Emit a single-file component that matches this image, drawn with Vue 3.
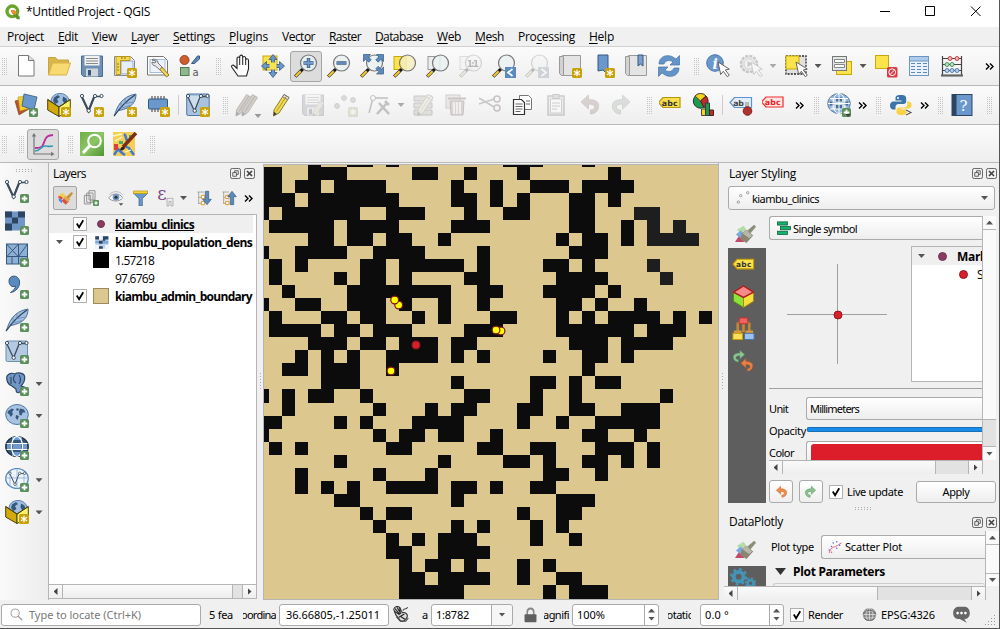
<script setup>
const vFit = {
  mounted(el, binding) {
    const n = el.textContent.length
    const natural = el.getBoundingClientRect().width
    if (n > 0 && binding.value) el.style.letterSpacing = (binding.value - natural) / n + 'px'
  },
}

const plus = '<rect x="15" y="15" width="9" height="9" rx="1.6" fill="#5b8f5b"/><path d="M19.5 16.7v5.6M16.7 19.5h5.6" stroke="#fff" stroke-width="1.8"/>'
const star = '<rect x="14" y="14" width="10" height="10" rx="1.6" fill="#c9a20a"/><path d="M19 15.7v6.6M16 17.3l6 3.4M22 17.3l-6 3.4" stroke="#fff" stroke-width="1.3"/>'
const handle = '<path d="M1.2 22.6l7-7" stroke="#333" stroke-width="3.4"/><path d="M1.6 22.2l5-5" stroke="#fcc92c" stroke-width="2"/><circle cx="8.3" cy="15.6" r="1.5" fill="#111"/>'
const lens = handle + '<circle cx="14.5" cy="9" r="8" fill="#eaf1f1" fill-opacity=".85" stroke="#777" stroke-width="1.2"/>'
const cursor = '<path d="M12 8l2.700 12.500 2.600-3.200 4 5.400 2-1.500-4-5.200 4-.9z" fill="#fff" stroke="#555" stroke-width=".9"/>'
const vee = '<path d="M1.7 3.5L8.500 18 14.300 3.500h7" fill="none" stroke="#3c4f5c" stroke-width="1.300"/><g fill="#fff" stroke="#3c4f5c"><circle cx="2" cy="3" r="1.600"/><circle cx="8.700" cy="17.700" r="1.700"/><circle cx="15" cy="3" r="1.600"/><circle cx="21.500" cy="3" r="1.600"/></g>'
const veeBold = '<path d="M1.700 3.500L8.500 18 14.300 3.500" fill="none" stroke="#34495e" stroke-width="2.100"/>' + vee
const feather = '<path d="M1.300 23C4 14 8 3.500 23 1c0 8-4 14-17 16.500" fill="#a3bfdf" stroke="#4b719b" stroke-width="1"/><path d="M1 23.200C6 16 13 8 22 2" stroke="#2c4560" stroke-width="1.200" fill="none"/><path d="M8 15V9M12 11V5.500M9 15l8-2.500M13 10.500l7-1.500" stroke="#6288b3" stroke-width=".8" fill="none"/>'
const globe = '<ellipse cx="12" cy="10.500" rx="11.300" ry="10"/>'
const land = '<path d="M3 7l4-2.500 2 1-2 2.500 1 2-2 3-2-3-1.500-1zM11 5l2-1 1 2-2 1zM15 4.500l4 1 1.500 3-3 0-1 3-2-.5-.5-3.500zM11 11l3 1-1.500 4-2-2z" fill="#35597c"/>'
const box = '<ellipse cx="13" cy="8" rx="9" ry="7.600" fill="#a3bfdf" stroke="#5a82b0"/><path d="M7 4.500l4-2.500 2 2-3 2 1.500 3-3 2-2.500-3zM16 3.500l3.500 2 1 4-3 1-2-3z" fill="#35597c"/><path d="M.7 6.500L12 14v9.500L.7 17z" fill="#d4a90c" stroke="#4c430f"/><path d="M23.300 6.500L12 14v9.500L23.300 17z" fill="#fbf26a" stroke="#4c430f"/><path d="M.7 6.500L12 14l11.300-7.500" fill="none" stroke="#4c430f"/>'
const magRoll = '<path d="M4.500 1.500h18v20H5z" fill="#e4e4e4" stroke="#9a9a9a"/><path d="M1.500 2.500h4v19h-2l-2-2z" fill="#d2d2d2" stroke="#9a9a9a"/>'
const grey = (s) => '<g opacity=".28" style="filter:grayscale(.75)">' + s + '</g>'
const cross = '<path d="M12 .5l4 5h-2.500v5h5V7.500l5 4.500-5 4.500v-3h-5v5H16l-4 5-4-5h2.500v-5h-5v3L.5 12l5-4.500v3h5v-5H8z" fill="#6b98cc" stroke="#35597c" stroke-width=".8"/><rect x="8.500" y="8.500" width="7" height="7" fill="#fbe34c"/>'
const undoArrow = (c, d) => `<path d="M4 9l7.500-7v4.500c8 0 11 3.500 10 8-.7 4-4 6.500-8 6.500v-4c3 0 4.500-1.500 4-3.500-.4-1.600-2.500-2.500-6-2.500V16z" fill="${c}" stroke="${d}" stroke-width=".8"/>`
const flip = (s) => '<g transform="matrix(-1 0 0 1 24 0)">' + s + '</g>'
const pencil = '<path d="M6 17L16 1.500l5 3L11 20l-5.500 3z" fill="#f1dc50" stroke="#8a7c30"/><path d="M16 1.500l5 3-1.500 2.200-5-3z" fill="#e6e6e6" stroke="#777"/><path d="M8.500 18.500l10-15.500" stroke="#b09a26"/><path d="M5.500 23l.4-4.500 3 2.500z" fill="#444"/>'
const greyPencil = '<path d="M6 17L16 1.500l5 3L11 20l-5.500 3z" fill="#d0ccc8" stroke="#c0bcb8"/><path d="M8.500 18.500l10-15.500" stroke="#b8b4b0"/><path d="M5.500 23l.4-4.500 3 2.500z" fill="#aaa"/>'
const tag = (fill, stroke, t, color) => `<path d="M1 9.500L5.500 4.500H22.500V14.500H5.500z" fill="${fill}" stroke="${stroke}" stroke-width="1.200"/><text x="4.300" y="12.500" font-family="DejaVu Sans" font-weight="700" font-size="7.800" textLength="${t.length * 5.300}" fill="${color}">${t}</text>`
const disk = '<path d="M1.500 2h21v20.500h-19l-2-2z" fill="#6f8fb4" stroke="#4b6c90"/><rect x="4.500" y="2" width="15" height="9.500" fill="#f2f2f2"/><path d="M6 4.500h12M6 7h12M6 9.500h12" stroke="#888"/><rect x="6" y="14.500" width="12" height="8" fill="#cfd5da"/><rect x="8" y="16" width="3" height="5.500" fill="#35597c"/>'
const brush = '<path d="M3 9l7-4 3 4-6 4z" fill="#b4dba8"/><path d="M2 14l5-4 4 4-4 4z" fill="#78a8df"/><path d="M1 22l4-6 6 6z" fill="#c2496c"/><path d="M8 13l5-4 7 6-7 8-6-4z" fill="#8a8472"/><path d="M9 13l4-3.500 6 5.500-3 3z" fill="#b9b7a8"/><path d="M14 10l7-6 2 2-6 7z" fill="#8c8d78"/>'

const icons = {
  qgis: '<circle cx="11" cy="11" r="8" fill="none" stroke="#6ba32d" stroke-width="5"/><path d="M11 10l3 0 8 9v4h-4l-7-9z" fill="#5a932a"/><path d="M9 9h5l4 4-2 3-3-1-4-3z" fill="#f08a2c"/>',
  file: '<path d="M4.500 1.500h10l5.500 5v15.500h-15.500z" fill="#fff" stroke="#777"/><path d="M14.500 1.500v5H20" fill="#ddd" stroke="#777"/>',
  open: '<path d="M1.500 21V3.500h7l2 2.500h11v4" fill="#d9b64a" stroke="#c8a43c"/><path d="M1.500 21l4-12h18l-4 12z" fill="#f8d972" stroke="#d8b348"/>',
  save: disk,
  layout: '<path d="M1.500 2.500h16l4 4v15h-20z" fill="#fff" stroke="#888"/><rect x="8" y="7" width="12" height="13" fill="#e6eefb" stroke="#8ba6d6"/><path d="M3 2.500h14v4H7.500v14H3z" fill="#f6d84f" stroke="#b6961f"/><path d="M4 10h2M4 13h2M4 16h2M9 3v2M12 3v2" stroke="#8a7420"/>' + star,
  tool: '<path d="M1.500 2.500h16l4 4v14.500h-20z" fill="#fff" stroke="#777"/><rect x="4" y="5.500" width="15" height="13" fill="#eef3fb" stroke="#a8bbe0"/><path d="M6 6c3-2 6 0 6 3l5 5-2.500 2.500L9.500 12C7 12 6 10 6 8l3 1 1-2z" fill="#e8e8e8" stroke="#777"/><path d="M16 13l7 8-2.500 2-6.500-7.500z" fill="#f5d25b" stroke="#8f7524"/>',
  style: '<circle cx="5.500" cy="6" r="4.500" fill="#cf5c2f" stroke="#9d4423"/><path d="M12.500 9.500l6-7.500h2v3l-5 4.500z" fill="#5a8ac0" stroke="#35597c"/><rect x="1.500" y="13.500" width="8.500" height="8" fill="#8fb88f" stroke="#4f7c4f"/><text x="13.500" y="21.500" font-family="DejaVu Sans" font-size="10" fill="#555">a</text>',
  hand: '<path d="M8 22L2 13.500c-1.500-2 1-3.200 2.500-1.500l2.500 2.500V4.500c0-2 2.500-2 2.700 0V3c0-2.500 3-2.500 3 0v1c0-2 3-2 3 .3V6c0-1.800 2.800-1.800 2.800.4V15l-2 7z" fill="#fff" stroke="#222" stroke-width="1.100" transform="translate(2 0)"/><path d="M11.700 4.500V11M14.700 4v7M17.700 5.500V11" stroke="#222"/>',
  pan: '<rect x="2" y="2" width="14" height="14" fill="#fbe34c" stroke="#c7a90c"/>' + cross,
  zin: lens + '<path d="M14.500 4v10M9.500 9h10" stroke="#35597c" stroke-width="3.400"/><path d="M14.500 4.500v9M10 9h9" stroke="#6f9bd0" stroke-width="1.800"/>',
  zout: lens + '<path d="M9.500 9h10" stroke="#35597c" stroke-width="3.400"/><path d="M10 9h9" stroke="#6f9bd0" stroke-width="1.500"/>',
  zfull: lens + '<g fill="#5a8ac0" stroke="#35597c" stroke-width=".7"><path d="M3.500.5h7L8.200 2.800l3 3-2.400 2.400-3-3L3.500 7.500z"/><path d="M23.500.5v7l-2.300-2.300-3 3-2.400-2.400 3-3L16.500.5z"/><path d="M23.500 20h-7l2.300-2.300-3-3 2.400-2.400 3 3L23.500 13z"/></g>',
  zsel: '<rect x="1" y="2.500" width="12" height="13" fill="#fbe34c" stroke="#c7a90c"/>' + lens.replace('#eaf1f1', '#f4eebc'),
  zlay: '<rect x="2" y="2.500" width="12" height="13" fill="#eee" stroke="#999"/>' + lens,
  znat: grey('<rect x="1" y="2.500" width="12" height="13" fill="#eee" stroke="#999"/>' + lens + '<text x="8" y="12.500" font-family="DejaVu Sans" font-weight="700" font-size="8.500" textLength="12" fill="#111">1:1</text>'),
  zlast: lens + '<rect x="13" y="13" width="11" height="11" fill="#5a8ac0"/><path d="M20.500 15l-4.500 3.500 4.500 3.500" stroke="#fff" stroke-width="1.700" fill="none"/>',
  znext: grey(lens + '<rect x="13" y="13" width="11" height="11" fill="#5a8ac0"/><path d="M16.500 15l4.500 3.500-4.500 3.500" stroke="#fff" stroke-width="1.700" fill="none"/>'),
  view: magRoll + star,
  bmnew: '<path d="M7 1h10v20l-5-5-5 1z" fill="#6b98cc" stroke="#35597c"/>' + star,
  bm: magRoll + '<path d="M14 1h5v11l-2.500-2-2.500 2z" fill="#78a1d0" stroke="#35597c"/>',
  refresh: '<path d="M2 10C2 3 9 0 15 2.500L19 5l3.500-3.500V11h-9.500l3-3c-4-3-8-1-9 2z" fill="#6394ca" stroke="#4673a6" stroke-width=".7"/><path d="M22 14c0 7-7 10-13 7.500L5 19l-3.500 3.500V13H11l-3 3c4 3 8 1 9-2z" fill="#6394ca" stroke="#4673a6" stroke-width=".7"/>',
  info: '<circle cx="9" cy="9" r="8.300" fill="#6b98cc" stroke="#4a77ab"/><text x="6.500" y="14.500" font-family="DejaVu Serif" font-style="italic" font-weight="700" font-size="14" fill="#fff">i</text>' + cursor,
  action: grey('<circle cx="10" cy="10" r="8" fill="#ccc" stroke="#555" stroke-width="2.500" stroke-dasharray="3 1.200"/><circle cx="10" cy="10" r="5" fill="#eee" stroke="#777"/><path d="M8.500 7v6l5-3z" fill="#555"/>' + cursor),
  select: '<path d="M2 2h20v18H2z" fill="#e1e1e1" stroke="#222" stroke-width="1.300" stroke-dasharray="2 1.200"/><rect x="2" y="2" width="13" height="13" fill="#fbe34c" stroke="#c7a90c"/>' + cursor,
  form: '<rect x="7.500" y="7.500" width="15" height="13" fill="#fbe34c" stroke="#c7a90c"/><rect x="3.500" y="2.500" width="14" height="14" fill="#e0e5e5" stroke="#777"/><path d="M5.500 5.500h10v3h-10zM5.500 10.500h10v3h-10z" fill="#fff" stroke="#888"/>',
  desel: '<rect x="1.500" y="1.500" width="13" height="13" fill="#fbe34c" stroke="#c7a90c"/><rect x="13" y="13" width="10.500" height="10.500" rx="1.500" fill="#d63a44"/><circle cx="18.200" cy="18.200" r="3.400" fill="none" stroke="#fff"/><path d="M16 20.500l4.500-4.500" stroke="#fff"/>',
  table: '<rect x="2.500" y="2.500" width="19" height="19" fill="#eaf2fc" stroke="#6f94c3"/><path d="M2.500 2.500h19v4.500h-19z" fill="#aecbec" stroke="#6f94c3"/><path d="M4 9.500h4M10 9.500h4M16 9.500h4M4 12.500h4M10 12.500h4M16 12.500h4M4 15.500h4M10 15.500h4M16 15.500h4M4 18.500h4M10 18.500h4M16 18.500h4" stroke="#5f87b8" stroke-width="1.200"/>',
  abacus: '<path d="M2.500 2v19M21.500 2v19M2.500 4.500h19M2.500 10.500h19M2.500 16.500h19" stroke="#444" stroke-width="1.200"/><path d="M1 21.500h22" stroke="#666" stroke-width="2.200"/><g stroke-width=".9"><g fill="#f5b5b5" stroke="#b33"><circle cx="10" cy="4.500" r="2"/><circle cx="17" cy="4.500" r="2"/></g><g fill="#b8e2c4" stroke="#3a8a50"><circle cx="7" cy="10.500" r="2"/><circle cx="12" cy="10.500" r="2"/></g><g fill="#b9d2f0" stroke="#4673a6"><circle cx="7" cy="16.500" r="2"/><circle cx="12" cy="16.500" r="2"/><circle cx="17" cy="16.500" r="2"/></g></g>',
  dsm: '<path d="M1 8l10-3 4 11-10 6z" fill="#b5532b" stroke="#8a3d1e" stroke-width=".6"/><path d="M4 4l11-1 1 12-10 3z" fill="#f2cf30" stroke="#b6961f" stroke-width=".6"/><path d="M10 1l13 3-3 13-12-4z" fill="#6b98cc" stroke="#35597c" stroke-width=".8"/>' + plus,
  pkg: box + star,
  vnew: veeBold + star,
  fnew: feather + star,
  chip: '<path d="M6 3v16M9 3v16M12 3v16M15 3v16M18 3v16" stroke="#333" stroke-width="1"/><rect x="2.500" y="6" width="19" height="10" rx="1" fill="#6b98cc" stroke="#35597c"/>' + star,
  vbox: '<rect x=".7" y="1" width="22.500" height="21.500" rx="1.500" fill="#a9c2de" stroke="#4e78a6"/><path d="M2 3l6 17 8-17z" fill="#cfdeee"/>' + vee + star,
  edits: '<g transform="translate(-4.500 0)">' + greyPencil + '</g><g transform="translate(1.500 0)">' + greyPencil + '</g>',
  pencil,
  savee: grey(disk + '<g transform="translate(8 7) scale(.7)">' + pencil + '</g>'),
  pts: grey('<g fill="#999" stroke="#666"><circle cx="3" cy="13" r="2.400"/><circle cx="10" cy="5" r="2.400"/><circle cx="19" cy="7" r="2.400"/></g>' + star),
  vert: grey('<path d="M2 20L6 5h15" stroke="#333" stroke-width="1.400" fill="none"/><circle cx="6" cy="5" r="2.500" fill="#fff" stroke="#333"/><path d="M10 21L20 10M12 10l10 11M18 8l4 4" stroke="#444" stroke-width="2.600"/>'),
  attr: grey('<path d="M2 3h18v5H2zM2 10h18v5H2zM2 17h18v5H2z" fill="#a8b878" stroke="#555"/>' + pencil),
  trash: grey('<rect x="1" y="2" width="14" height="13" fill="#d6c99b" stroke="#766"/><path d="M3 5.500h18" stroke="#a33" stroke-width="2"/><path d="M5 8h14l-1 14H6z" fill="#c77" stroke="#833"/><path d="M9 9v12M12 9v12M15 9v12" stroke="#fff" stroke-width="1.500"/>'),
  cut: grey('<path d="M1 5l15 9M1 11l15-5" stroke="#555" stroke-width="1.600"/><circle cx="19" cy="6" r="3" fill="none" stroke="#833" stroke-width="1.500"/><circle cx="19" cy="15" r="3" fill="none" stroke="#833" stroke-width="1.500"/>'),
  copy: '<path d="M8.500 2.500h9l3 3v11h-12z" fill="#fff" stroke="#777"/><path d="M2.500 6.500h8l3 3v12h-11z" fill="#fff" stroke="#333" stroke-width="1.200"/><path d="M4.500 11h7M4.500 13.500h7M4.500 16h7M4.500 18.500h5M15 8h4M15 11h4" stroke="#666"/>',
  paste: grey('<rect x="4" y="3" width="16" height="19" fill="#ddd7a8" stroke="#555" stroke-width="1.400"/><path d="M6.500 6h11v14h-11z" fill="#fff" stroke="#777"/><rect x="9" y="1.500" width="6" height="4" fill="#aaa" stroke="#555"/><path d="M8 10h8M8 13h8M8 16h5" stroke="#666"/>'),
  undo: grey(undoArrow('#bf6b4a', '#8f4a30')),
  redo: grey(flip(undoArrow('#7fae84', '#4e7c55'))),
  abc: '<g transform="translate(-1.500 0)">' + tag('#f9df4a', '#b5960f', 'abc', '#333') + '</g>',
  diagram: '<circle cx="8.500" cy="8" r="7.200" fill="#1f9a4a" stroke="#233"/><path d="M8.500 8L3 3a7.200 7.200 0 0 1 11 0z" fill="#f3d71b" stroke="#544"/><path d="M8.500 8L14 3a7.200 7.200 0 0 1-2 11.500z" fill="#c22a2a" stroke="#422"/><path d="M9.500 16h4v6.500h-4z" fill="#f3d71b" stroke="#544"/><path d="M13.500 10h4v12.500h-4z" fill="#1f9a4a" stroke="#244"/><path d="M17.500 17h4v5.500h-4z" fill="#c22a2a" stroke="#422"/>',
  abpin: tag('#e4eefa', '#5a94d4', 'ab', '#444') + '<path d="M18 9v8" stroke="#777" stroke-width="3"/><path d="M18 9v8" stroke="#ddd" stroke-width="1.400"/><circle cx="18.500" cy="18" r="4.300" fill="#b3302f" stroke="#7c2120"/>',
  abred: '<g transform="translate(-1.500 -.5)">' + tag('#fde6e6', '#f22a2a', 'abc', '#e22') + '</g>',
  web: '<g fill="#8fb3d9" stroke="#5f7f9f">' + globe + '</g><path d="M4.500 5h15v11h-15z" fill="#dbe6ee" opacity=".7"/><path d="M9 4.500h6v4H9zM9 12h6v4H9zM3 8.500h4v4H3zM17 8.500h4v4h-4z" fill="#4a7098"/><path d="M1 10.500h22M3 5.500h18M3 16h18M12 .5v20" stroke="#fff"/><ellipse cx="12" cy="10.500" rx="6" ry="10" fill="none" stroke="#fff"/>' + plus + '<path d="M18 21h6l-3 3z" fill="#444"/>',
  python: '<path d="M12 2c-5 0-5.500 1.500-5.500 3.500v2h6v1H4.500C2 8.500 1 11 1 12.500s.6 4 3.500 4h2v-2.500c0-2 1.500-3 3-3h5c1.700 0 2.700-1 2.700-2.700V5.500c0-2-1-3.500-5.200-3.500z" fill="#3a74a8"/><path d="M12.500 22c5 0 5.500-1.500 5.500-3.500v-2h-6v-1h7.500c2.500 0 3-2 3-3.500s-.6-3.500-3-3.500h-1.300v3c0 2-1.500 3-3 3h-5c-1.700 0-2.700 1-2.700 2.500v2c0 2 1 3 5 3z" fill="#fbd245"/><circle cx="9" cy="5" r="1" fill="#fff"/><path d="M17 17l5 2.500-5 2.500" fill="none" stroke="#fff" stroke-width="2.500"/><path d="M17 17l5 2.500-5 2.500" fill="none" stroke="#555" stroke-width="1.200"/>',
  help: '<rect x="2" y="1.500" width="20" height="21" fill="#6b98cc" stroke="#2c4560"/><rect x="2" y="1.500" width="4.500" height="21" fill="#2c4560"/><text x="9.500" y="17.500" font-family="DejaVu Serif" font-size="15" fill="#fff">?</text>',
  plot: '<path d="M3 2v20h19" stroke="#777" fill="none" stroke-width="1.200"/><path d="M.8 4.500L3 1l2.200 3.500zM20 19.800l3.500 2.200-3.500 2.200z" fill="#777"/><path d="M4 16c9 0 7-2 10-8 1.500-4 4-4.500 8-5" stroke="#bb2f9b" stroke-width="1.900" fill="none"/><path d="M4 19c5 0 6-5 10-5 3 0 4 1 8 0" stroke="#2f9cb4" stroke-width="1.600" fill="none"/>',
  qms: '<defs><linearGradient id="gq" x1="0" y1="0" x2="1" y2="1"><stop offset="0" stop-color="#6fae48"/><stop offset=".5" stop-color="#8cc665"/><stop offset="1" stop-color="#4f9433"/></linearGradient></defs><rect width="24" height="24" fill="url(#gq)"/><circle cx="14.500" cy="9" r="6.300" fill="none" stroke="#fff" stroke-width="2"/><path d="M3 21l7-7.500" stroke="#fff" stroke-width="3"/>',
  osm: '<rect width="22" height="24" fill="#f7cf57"/><path d="M1 23l4-6 4 4 3 2M11 2c3 2 1 5 4 8M15 15l6 8M12 12l2 4" stroke="#3f79d0" stroke-width="2.600" fill="none"/><path d="M1 12h4v6H1z" fill="#d5433a"/><path d="M6 9h4v3H6zM16 3h3v3h-3z" fill="#4ca867"/><path d="M0 4l9-2M2 9l7-4M12 20l6-2" stroke="#fff7c0" stroke-width="1.300"/><path d="M10 15L23 1" stroke="#7d2f16" stroke-width="3.600"/><path d="M7 18c1-4 3-4 5-2-1 2-3 3-5 2z" fill="#382018"/>',
  vadd: veeBold + plus,
  radd: '<rect y=".5" width="20" height="19" fill="#6f96c6"/><path d="M0 .5h7v6H0zM13 .5h7v6h-7zM7 6.500h6v6H7zM0 12.500h7v7H0z" fill="#2c4560"/>' + plus,
  mesh: '<rect x="1.500" y="1" width="21" height="20" fill="#8fb0d5" stroke="#35597c"/><path d="M1.500 1l12 13M13.500 1l-12 13M1.500 13.500h21M13.500 1v20M22.500 1l-9 12.500M7 14v7" stroke="#35597c"/>' + plus,
  comma: '<path d="M4 6c0-6 9-7 10.500 0 1 6-4 11-9 11.500 3-2 5-4 5-6.500C7 13 4 10 4 6z" fill="#5a8ac0" stroke="#35597c"/>' + plus,
  fadd: feather + plus,
  vbadd: '<rect x="1" y="1" width="21.500" height="20.500" rx="1.500" fill="#b4cae3" stroke="#6f8fb0"/>' + vee + plus,
  pg: '<path d="M2 4c2-3.500 6-3 8-2 3-2 9-1 9.500 2 .8 4-1.500 8-3.500 10l3 1-3 2c-1 5-5 5-5 0l-4-3C3 13 1 8 2 4z" fill="#6f96c6" stroke="#2c4560" stroke-width="1.200"/><path d="M10 3c-2.500 3-2 6 1 8M14 3c2 3 2 6 0 9M6 5v7" stroke="#2c4560" fill="none" stroke-width="1.100"/>' + plus,
  wms: '<g fill="#a8c3e2" stroke="#4e78a6">' + globe + '</g>' + land + plus,
  wcs: '<g fill="#35597c" stroke="#222d3c" stroke-width="1.200">' + globe + '</g><path d="M7 1h10v3H7zM2 8h4v5H2zM8 8h8v5H8zM18 8h4v5h-4zM7 16h10v4H7z" fill="#6f9bd0"/><path d="M1.500 7.500h21M1.500 13.500h21" stroke="#fff" stroke-width="1.200"/><ellipse cx="12" cy="10.500" rx="5.500" ry="10" fill="none" stroke="#fff" stroke-width="1.200"/>' + plus,
  wfs: '<g fill="#eef4fb" stroke="#5a8ac0" stroke-width="1.200">' + globe + '</g><path d="M1 10h22M12 1v19M5 4v13M19 4v13" stroke="#9bbbe0"/><g transform="translate(3.500 3) scale(.75)">' + vee + '</g>' + plus,
  stylebrush: '<path d="M2 8l7-4 4 5-4 3z" fill="#f1cf4b"/><path d="M1 10l4-1 4 3-3 3z" fill="#e0483c"/><path d="M2 13l4 0 2 4-1 3-4-4z" fill="#5a8ae0"/><path d="M7 16l4-4 7 5-5 5z" fill="#d9503c"/><path d="M9 12l4-3 7 5-4 4z" fill="#e0a850"/><path d="M14 10l8-7 2 2-6 8z" fill="#cf8f35"/>',
  group: '<path d="M9 1h9v14H9zM5.500 4.500H15v14H5.500zM2 8h9.500v13H2z" fill="#eee" stroke="#888" stroke-width="1.300"/>' + plus,
  eye: '<path d="M1 12c5-8 17-8 21 0-5 6-16 6-21 0z" fill="#fff" stroke="#999" stroke-width="1.500"/><circle cx="12" cy="11" r="5" fill="#6f96c6"/><circle cx="12" cy="11" r="2.300" fill="#333"/><path d="M2 7c5-6 15-6 20 0" stroke="#bbb" fill="none" stroke-width="1.500"/><path d="M16 20h7l-3.500 3.500z" fill="#555"/>',
  filter: '<path d="M1 5l8 8v11h5V13l8-8z" fill="#6b98cc" stroke="#35597c"/><rect x="1" y="1.500" width="21" height="4" fill="#f5d33a" stroke="#b5960f"/>',
  eps: '<text x="-1" y="15" font-family="DejaVu Serif" font-size="27" fill="#7c4a80">ε</text><path d="M13.500 24V12.500h9V24h-3v-7h-3v7z" fill="#eee" stroke="#999"/>',
  expand: '<path d="M2 3h10M4 3v18M4 11h5M4 20h5" stroke="#888" fill="none"/><path d="M8 8h5v5H8zM8 17h5v5H8z" fill="#fff" stroke="#e29b28" stroke-width="1.500"/><path d="M14 2h5v12h4l-6.500 8L10 14h4z" fill="#5a8ac0" stroke="#35597c"/>',
  collapse: '<path d="M2 3h10M4 3v18M4 11h5M4 20h5" stroke="#888" fill="none"/><path d="M7 8h5v5H7zM7 17h5v5H7z" fill="#fff" stroke="#e29b28" stroke-width="1.500"/><path d="M14 22h5V10h4l-6.500-8L10 10h4z" fill="#5a8ac0" stroke="#35597c"/>',
  float: '<rect x="1" y="1" width="22" height="22" rx="4" fill="none" stroke="#555" stroke-width="2"/><path d="M6 10h8v8H6zM10 10V6h8v8h-4" fill="none" stroke="#555" stroke-width="2"/>',
  close: '<rect x="1" y="1" width="22" height="22" rx="4" fill="none" stroke="#555" stroke-width="2"/><path d="M6.500 6.500l11 11M17.500 6.500l-11 11" stroke="#444" stroke-width="3.600"/>',
  brush,
  label: '<g transform="translate(0 2)">' + tag('#fbe34c', '#c7a000', 'abc', '#333') + '</g>',
  cube: '<path d="M12 1l10.500 6.500L12 13 1.500 7.500z" fill="#f58a8a" stroke="#a02020"/><path d="M1.500 7.500L12 13v10.500L1.500 17z" fill="#8ee33a" stroke="#4d8f14"/><path d="M22.500 7.500L12 13v10.500L22.500 17z" fill="#f9df3c" stroke="#a58a10"/><path d="M1.500 7.500L12 1l10.500 6.500L12 13z" fill="none" stroke="#b32020" stroke-width="1.400"/>',
  paint: '<path d="M12 7v9M6 6v10M18 6v10M6 6h12" stroke="#c28734" stroke-width="2.800" fill="none"/><rect x="7.500" y="1" width="9" height="6" fill="#f06262" stroke="#b33"/><path d="M2 14h8v3H2zM14 14h8v3h-8z" fill="#d89a3c"/><rect x="1" y="17" width="10" height="6.500" fill="#f9e05a" stroke="#c7a000"/><rect x="13" y="17" width="10" height="6.500" fill="#9cc3f0" stroke="#4673a6"/>',
  hist: '<g transform="translate(16 0) scale(-.68 .65)">' + undoArrow('#8cc496', '#4e8c5a') + '</g><g transform="translate(6.500 8.500) scale(.7)">' + undoArrow('#e88043', '#b85a25') + '</g>',
  undoc: undoArrow('#ea8a4b', '#d06c2c'),
  redoc: flip(undoArrow('#8cbf8e', '#5a9260')),
  points: '<g fill="#fff" stroke="#888" stroke-width="1.400"><circle cx="4" cy="19" r="2"/><circle cx="8" cy="8" r="2"/><circle cx="20" cy="3" r="2"/></g>',
  single: '<g fill="#12b36a" stroke="#0b5b3a" stroke-width="1.300"><rect x="1" y="1.500" width="17" height="5.500"/><rect x="6" y="9.500" width="17" height="5.500"/><rect x="1" y="17.500" width="17" height="5.500"/></g>',
  scatter: '<path d="M2 22c3-9 6-9 11-11s6-4 10-6" stroke="#e05a6a" fill="none" stroke-width="1.600"/><g fill="#5a5ae0"><circle cx="2" cy="17" r="1.300"/><circle cx="6" cy="11" r="1.300"/><circle cx="9" cy="5" r="1.300"/><circle cx="15" cy="14" r="1.300"/><circle cx="15" cy="3" r="1.300"/><circle cx="20" cy="9" r="1.300"/></g><circle cx="6" cy="21" r="1.300" fill="#e05a6a"/>',
  gears: '<g fill="none" stroke="#4494b5"><circle cx="8" cy="9" r="4.500" stroke-width="3.500"/><circle cx="8" cy="9" r="7" stroke-width="2" stroke-dasharray="2.700 2.800"/><circle cx="19" cy="15" r="2.800" stroke-width="2.400"/><circle cx="19" cy="15" r="4.600" stroke-width="1.500" stroke-dasharray="2 1.600"/></g>',
  search: '<circle cx="9.500" cy="9.500" r="7.500" fill="none" stroke="#999" stroke-width="1.800"/><path d="M15 15l7.500 7.500" stroke="#999" stroke-width="2.400"/>',
  mouse: '<path d="M1 5c2-5 6-5 9-3l4 8c5-1 9 3 7 7s-6 7-10 5L4 13z" fill="#ddd" stroke="#333" stroke-width="1.600"/><path d="M3 4l7 8M6 2l6 10M2 8l8 5M10 2l1 9M12 16l6 4M9 17l8-5" stroke="#222" stroke-width="1.700"/><path d="M15 7c1-5 4 0 7-5M5 16l6 7h8l4-5" stroke="#444" stroke-width="1.600" fill="none"/>',
  lock: '<path d="M6 12V7.500c0-7 12-7 12 0V12" stroke="#888" stroke-width="3" fill="none"/><rect x="1" y="11" width="22" height="12" rx="1.500" fill="#5f5f5f"/>',
  crs: '<circle cx="12" cy="12" r="10.500" fill="#8a8a8a"/><path d="M1 12h22M3.500 6.500h17M3.500 17.500h17M12 1v22" stroke="#eee"/><ellipse cx="12" cy="12" rx="5.500" ry="10.500" fill="none" stroke="#eee"/><path d="M1.500 12C4 3 20 3 22.500 12M3 17c4 6 14 6 18 0" fill="none" stroke="#555" stroke-width="1.300"/>',
  bubble: '<path d="M7 1h10c9 1 9 17 0 17.500l-1 0 3.500 5-10-5H7C-2 18-2 2 7 1z" fill="#666"/><g fill="#fff"><circle cx="6.500" cy="10" r="1.900"/><circle cx="12" cy="10" r="1.900"/><circle cx="17.500" cy="10" r="1.900"/></g>',
  rlayer: '<rect x="2" y="2" width="21" height="20" fill="#c3d6ec"/><path d="M2 2h6v5H2zM14 2h9v5h-5v3h-4zM8 9h6v5H8zM8 18h6v4H8z" fill="#2c4560"/><path d="M14 9h9v5h-9zM2 9h6v4H2z" fill="#7ea6d4"/><path d="M8 2h6v5H8zM2 16h6v6H2zM18 16h5v6h-5z" fill="#f2f6fb"/>',
}

const I = (n, on) => ({ t: 'icon', n, on })
const G = (w, p) => ({ t: 'grip', w, p })
const A = (off) => ({ t: 'arrow', w: 12, off })
const S = (w) => ({ t: 'sep', w })
const M = (w) => ({ t: 'more', w })
const ic = (s) => s.split(' ').map((n) => I(n, false))
const bars = [
  [G(9.5, 2), ...ic('file open save layout tool style'), G(16, 8), ...ic('hand pan'), I('zin', true), ...ic('zout zfull zsel zlay znat zlast znext view bmnew bm refresh'), G(16, 8), ...ic('info action'), A(true), I('select'), A(), I('form'), A(), ...ic('desel table abacus'), M(41)],
  [G(9.5, 2), ...ic('dsm pkg vnew fnew chip'), S(7), I('vbox'), G(16, 8), ...ic('edits pencil savee pts vert'), A(true), ...ic('attr trash cut copy paste undo redo'), G(16, 8), ...ic('abc diagram'), S(4), ...ic('abpin abred'), M(18), G(14, 5), I('web'), M(14), G(15, 6), I('python'), M(14), G(14, 6), I('help'), G(16, 8)],
  [G(9.5, 2), G(17, 9), I('plot', true), G(16, 8), ...ic('qms osm'), G(16, 8)],
]
const menu = [
  ['Pro', 'j', 'ect', 7, 37], ['', 'E', 'dit', 58, 20], ['', 'V', 'iew', 92, 25], ['', 'L', 'ayer', 131, 28],
  ['', 'S', 'ettings', 173, 42], ['', 'P', 'lugins', 229, 39], ['Vect', 'o', 'r', 282, 33], ['', 'R', 'aster', 329, 32],
  ['', 'D', 'atabase', 375, 48], ['', 'W', 'eb', 437, 24], ['', 'M', 'esh', 475, 29], ['Pro', 'c', 'essing', 518, 57], ['', 'H', 'elp', 589, 25],
].map((m, i, a) => ({ a: m[0], u: m[1], b: m[2], w: m[4], gap: i ? m[3] - a[i - 1][3] - a[i - 1][4] : m[3] }))

const side = [['vadd'], ['radd'], ['mesh'], ['comma'], ['fadd'], ['vbadd'], ['pg', 1], ['wms', 1], ['wcs'], ['wfs', 1], ['pkg', 1]]

const xs = [264, 269, 282, 295, 308, 321, 334, 347, 360, 373, 386, 399, 412, 425, 438, 451, 464, 477, 490, 503, 517, 530, 543, 556, 569, 582, 595, 608, 621, 634, 647, 660, 673, 686, 699, 712]
const ys = [165, 167, 180, 193, 207, 220, 233, 246, 259, 272, 285, 298, 311, 324, 337, 350, 363, 376, 389, 403, 416, 429, 442, 455, 468, 481, 494, 507, 520, 533, 546, 559, 572, 585, 599]
const raster = `4 7-8 10 19-21 25
0-1 4-6 12-13 16 20 27
0-1 3-4 6-9 15 18 21-23 25-28
0-2 4-10 15-16 18 20 24-25 27
0 2-7 10-12 16 19-20 24-25 g29-30
1-5 7-10 15-17 24-25 28 g30 g32
4-5 7-8 10-11 14 23 25-26 28 g30-33
0 3-6 9-12 17 24-26
1 3 8-9 11-15 17 22-23 25 g30
1 6 8-9 11 16-17 23-26 g31
2 7-14 17-18 22-25 27
0 3-4 7-9 11 14 17 23-24 26 29
1 5-6 8-9 12 14 18-19 23 25 27-30 32 34
1-4 6-7 9-11 16-18 23-28 30-32
4-6 8-9 11-13 15-16 24-26 28-31
3 5 7 10-13 15 17 22 25-26 28
2-3 5-7 10 25
5-7 15 21-22 24 26-27
0 2 4-5 8 16-17 21 24 31
2 9 13 15-16 20-21 24-25 28-30
0-1 6 8 12-15 20 23 26-30
0 9 11-12 14-15 18 25-26 29
1 3 10-11 17-18 21-22 26-28 30
6 14 19-20 22 25-26 28 30
3 9 13 22-23 26
3 5 7 10-13 15-16 18 21-22
6-7 15 23-25
8 10-11 20 23-24
9 15 17 21 23
10 12 14-16 21 24
10-11 14-17
11 13-14 16 20 22
11-12 14-17 20 23-24
11-15 22 24-26`
const cells = raster.split('\n').flatMap((line, r) => line.split(' ').map((tok) => {
  const g = tok[0] === 'g'
  const [s, e = s] = tok.replace('g', '').split('-').map(Number)
  return { x: xs[s], y: ys[r], w: xs[e + 1] - xs[s], h: ys[r + 1] - ys[r], f: g ? '#1e1e1e' : '#0c0c0c' }
}))
const pins = [[398.700, 305, 1], [394.700, 300, 1], [501, 331, 1], [496, 330, 1], [416, 345, 0], [391, 371, 1]]
</script>

<template>
  <div class="win">
    <header class="title">
      <svg class="logo" viewBox="0 0 24 24" v-html="icons.qgis" />
      <span v-fit="124">*Untitled Project - QGIS</span>
      <svg class="ctl" width="119" height="26" viewBox="0 0 119 26"><path d="M0 12.500h10M45.500 7.500h9v9h-9zM91 7.500l9.500 9.500M100.500 7.500L91 17" fill="none" stroke="#000" /></svg>
    </header>
    <nav class="menu">
      <span v-for="m in menu" :key="m.u + m.b" :style="{ marginLeft: m.gap + 'px', width: m.w + 'px' }"><span v-fit="m.w">{{ m.a }}<u>{{ m.u }}</u>{{ m.b }}</span></span>
    </nav>
    <div v-for="(bar, bi) in bars" :key="bi" class="bar">
      <template v-for="(it, k) in bar" :key="k">
        <div v-if="it.t === 'icon'" class="slot" :class="{ on: it.on }"><svg viewBox="0 0 24 24" v-html="icons[it.n]" /><i v-if="it.n === 'edits'" class="dd corner" /></div>
        <div v-else-if="it.t === 'grip'" class="gslot" :style="{ width: it.w + 'px', paddingLeft: it.p + 'px' }"><i class="grip" /></div>
        <div v-else-if="it.t === 'arrow'" class="aslot"><i class="dd" :class="{ off: it.off }" /></div>
        <div v-else-if="it.t === 'sep'" class="sslot" :style="{ width: it.w + 'px' }"><i /></div>
        <div v-else class="more" :style="{ width: it.w + 'px' }"><svg width="9" height="7" viewBox="0 0 9 7"><path d="M1 .5l3 3-3 3M5 .5l3 3-3 3" /></svg></div>
      </template>
    </div>

    <main class="main">
      <aside class="side">
        <i class="hgrip" />
        <div v-for="s in side" :key="s[0]" class="sitem"><svg viewBox="0 0 24 24" v-html="icons[s[0]]" /><i v-if="s[1]" class="dd" /></div>
      </aside>

      <section class="layers">
        <div class="dockhead"><span v-fit="33">Layers</span><b /><svg viewBox="0 0 24 24" v-html="icons.float" /><svg viewBox="0 0 24 24" v-html="icons.close" /></div>
        <div class="ltools">
          <div class="lt on"><svg viewBox="0 0 24 24" v-html="icons.stylebrush" /></div>
          <div class="lt"><svg viewBox="0 0 24 24" v-html="icons.group" /></div>
          <div class="lt"><svg viewBox="0 0 24 24" v-html="icons.eye" /></div>
          <div class="lt"><svg viewBox="0 0 24 24" v-html="icons.filter" /></div>
          <div class="lt"><svg class="over" viewBox="0 0 24 24" v-html="icons.eps" /></div>
          <i class="dd" />
          <div class="lt l2"><svg viewBox="0 0 24 24" v-html="icons.expand" /></div>
          <div class="lt"><svg viewBox="0 0 24 24" v-html="icons.collapse" /></div>
          <div class="more mm"><svg width="9" height="7" viewBox="0 0 9 7"><path d="M1 .5l3 3-3 3M5 .5l3 3-3 3" /></svg></div>
        </div>
        <div class="tree">
          <div class="row sel"><span class="tw" /><span class="cb"><svg viewBox="0 0 13 13"><path d="M3 6l2.500 4L10 2.500" /></svg></span><span class="ri"><i class="dot" /></span><strong v-fit="79"><u>kiambu_clinics</u></strong></div>
          <div class="row"><span class="tw"><i class="dd" /></span><span class="cb"><svg viewBox="0 0 13 13"><path d="M3 6l2.500 4L10 2.500" /></svg></span><span class="ri"><svg width="15" height="15" viewBox="0 0 24 24" v-html="icons.rlayer" /></span><strong v-fit="145">kiambu_population_densit</strong></div>
          <div class="row"><span class="tw" /><span class="cb none" /><span class="ri"><i class="sw black" /></span><span v-fit="39">1.57218</span></div>
          <div class="row"><span class="tw" /><span class="cb none" /><span class="ri" /><span v-fit="39">97.6769</span></div>
          <div class="row"><span class="tw" /><span class="cb"><svg viewBox="0 0 13 13"><path d="M3 6l2.500 4L10 2.500" /></svg></span><span class="ri"><i class="sw tan" /></span><strong v-fit="137">kiambu_admin_boundary</strong></div>
          <div class="fill" />
          <div class="hs"><span class="ab"><i class="la" /></span><b /><em class="lthumb" /><span class="ab"><i class="ra" /></span></div>
        </div>
      </section>
      <div class="split"><i class="vgrip" /></div>
      <svg class="map" viewBox="264 165 454 434" width="454" height="434">
        <rect x="264" y="165" width="454" height="434" fill="#dcc78f" />
        <g shape-rendering="crispEdges"><rect v-for="(c, i) in cells" :key="i" :x="c.x" :y="c.y" :width="c.w" :height="c.h" :fill="c.f" /></g>
        <circle v-for="(p, i) in pins" :key="'p' + i" :cx="p[0]" :cy="p[1]" r="3.900" :fill="p[2] ? '#ffff00' : '#d8202c'" :stroke="p[2] ? '#7c1218' : '#921820'" stroke-width="1.200" />
      </svg>
      <div class="split s2"><i class="vgrip" /></div>

      <section class="right">
        <div class="dockhead"><span v-fit="67">Layer Styling</span><b /><svg viewBox="0 0 24 24" v-html="icons.float" /><svg viewBox="0 0 24 24" v-html="icons.close" /></div>
        <div class="combo c1"><svg width="14" height="14" viewBox="0 0 24 24" v-html="icons.points" /><span v-fit="67">kiambu_clinics</span><b /><i class="dd" /></div>
        <div class="styling">
          <div class="tabs">
            <div class="tab cur"><svg viewBox="0 0 24 24" v-html="icons.brush" /></div>
            <div v-for="n in ['label', 'cube', 'paint', 'hist']" :key="n" class="tab"><svg viewBox="0 0 24 24" v-html="icons[n]" /></div>
          </div>
          <div class="sbody">
            <div class="scroll">
              <div class="view">
                <div class="combo open"><svg width="14" height="14" viewBox="0 0 24 24" v-html="icons.single" /><span v-fit="64">Single symbol</span></div>
                <div class="prev">
                  <svg width="142" height="135" viewBox="769 246 142 135"><path d="M837.500 264v100M787 314.500h100" stroke="#a0a0a0" /><circle cx="838" cy="315" r="4" fill="#dc1e2a" stroke="#8c1a20" /></svg>
                  <div class="sym">
                    <div class="srow hd"><i class="dd" /><i class="dot p" /><strong>Marker</strong></div>
                    <div class="srow ch"><i class="dot r" /><span>Simple Marker</span></div>
                  </div>
                </div>
                <hr>
                <div class="frow"><label><span v-fit="19">Unit</span></label><div class="combo open f"><span v-fit="49">Millimeters</span></div></div>
                <div class="frow op"><label><span v-fit="37">Opacity</span></label><i class="slider" /></div>
                <div class="frow co"><label><span v-fit="25">Color</span></label><div class="combo open f col"><i /></div></div>
              </div>
              <div class="vs"><span class="vb"><i class="ua" /></span><b /><em /><span class="vb"><i class="da" /></span></div>
            </div>
            <div class="hs h2"><span class="ab"><i class="la" /></span><b /><em /><span class="ab"><i class="ra" /></span></div>
            <div class="acts">
              <div class="btn"><svg viewBox="0 0 24 24" v-html="icons.undoc" /></div>
              <div class="btn b2"><svg viewBox="0 0 24 24" v-html="icons.redoc" /></div>
              <span class="cb"><svg viewBox="0 0 13 13"><path d="M3 6l2.500 4L10 2.500" /></svg></span>
              <span class="lu"><span v-fit="56">Live update</span></span>
              <div class="btn apply"><span v-fit="27">Apply</span></div>
            </div>
          </div>
        </div>
        <div class="hsplit"><i class="hgrip" /></div>
        <div class="dockhead dp"><span v-fit="54">DataPlotly</span><b /><svg viewBox="0 0 24 24" v-html="icons.float" /><svg viewBox="0 0 24 24" v-html="icons.close" /></div>
        <div class="plotly">
          <div class="pside"><div class="tab cur"><svg viewBox="0 0 24 24" v-html="icons.brush" /></div><div class="gear"><svg viewBox="0 0 24 24" width="26" height="26" v-html="icons.gears" /></div></div>
          <div class="pmain">
            <div class="prow"><label><span v-fit="43">Plot type</span></label><div class="combo open"><svg width="14" height="14" viewBox="0 0 24 24" v-html="icons.scatter" /><span v-fit="57">Scatter Plot</span></div></div>
            <div class="pp"><i /><strong v-fit="92">Plot Parameters</strong></div>
            <div class="gb" />
          </div>
          <div class="vs"><span class="vb"><i class="ua" /></span><b /><span class="vb last"><i class="da" /></span></div>
        </div>
        <div class="hs h3"><span class="ab"><i class="la" /></span><b /><em /><span class="ab"><i class="ra" /></span></div>
      </section>
    </main>

    <footer class="status">
      <div class="loc"><svg width="13" height="13" viewBox="0 0 24 24" v-html="icons.search" /><span v-fit="112">Type to locate (Ctrl+K)</span></div>
      <div class="st fea"><span v-fit="24">5 fea</span></div>
      <div class="st coord"><span v-fit="35">oordina</span></div>
      <div class="inp xy"><span v-fit="94">36.66805,-1.25011</span></div>
      <svg class="mouse" width="16" height="16" viewBox="0 0 24 24" v-html="icons.mouse" />
      <div class="st sc"><span>a</span></div>
      <div class="inp scale"><span v-fit="33">1:8782</span><b /><span class="cbtn"><i class="dd" /></span></div>
      <svg class="lock" width="13" height="16" viewBox="0 0 24 24" preserveAspectRatio="none" v-html="icons.lock" />
      <div class="st mag"><span v-fit="26">agnifi</span></div>
      <div class="inp pct"><span v-fit="28">100%</span><b /><span class="spin"><i class="ua" /><i class="da" /></span></div>
      <div class="st rot"><span v-fit="26">otatic</span></div>
      <div class="inp deg"><span v-fit="24">0.0 °</span><b /><span class="spin"><i class="ua" /><i class="da" /></span></div>
      <span class="cb"><svg viewBox="0 0 13 13"><path d="M3 6l2.500 4L10 2.500" /></svg></span>
      <div class="st ren"><span v-fit="35">Render</span></div>
      <svg class="crs" width="15" height="15" viewBox="0 0 24 24" v-html="icons.crs" />
      <div class="st epsg"><span v-fit="54">EPSG:4326</span></div>
      <svg class="bub" width="17" height="17" viewBox="0 0 24 24" v-html="icons.bubble" />
      <svg class="sg" width="11" height="11" viewBox="0 0 11 11"><path d="M9 0h1v1H9zM6 3h1v1H6zM9 3h1v1H9zM3 6h1v1H3zM6 6h1v1H6zM9 6h1v1H9zM0 9h1v1H0zM3 9h1v1H3zM6 9h1v1H6zM9 9h1v1H9z" fill="#999" /></svg>
    </footer>
  </div>
</template>

<style>
html, body { margin: 0; overflow: hidden; }
</style>

<style scoped>
* { box-sizing: border-box; }
.win { width: 1000px; height: 629px; display: flex; flex-direction: column; background: #f0f0f0; border-right: 1px solid #555; border-bottom: 1px solid #555; font: 11px/14px "Noto Sans", "Open Sans", sans-serif; color: #000; overflow: hidden; white-space: nowrap; }
svg { display: block; flex: none; }
i { display: block; flex: none; }
.over { overflow: visible; }
.title { height: 27px; flex: none; background: #fff; display: flex; align-items: center; padding: 0 0 4px 5px; font: 12px/16px "Open Sans", sans-serif; }
.logo { width: 16px; height: 16px; margin-right: 5px; }
.ctl { margin-left: auto; }
.menu { height: 20px; flex: none; display: flex; align-items: center; border-bottom: 1px solid #d0d0d0; font: 12px/17px "Open Sans", sans-serif; }
.menu u { text-underline-offset: 2px; }
.bar { height: 39px; flex: none; display: flex; align-items: center; border-bottom: 1px solid #b9b9b9; background: linear-gradient(#fbfbfb, #eee); }
.bar:nth-of-type(3) { height: 38px; padding-top: 1px; }
.slot { width: 33px; height: 32px; flex: none; display: flex; align-items: center; justify-content: center; border-radius: 3px; position: relative; }
.slot.on { width: 32px; height: 31px; margin: 0 1px 0 0; background: #dcdcdc; border: 1px solid #a5a5a5; }
.slot svg { width: 24px; height: 24px; }
.gslot { flex: none; }
.grip { width: 5px; height: 17px; background: radial-gradient(circle at .5px .5px, #c4c4c4 .7px, transparent .8px) 0 0 / 2px 2px; }
.aslot { width: 12px; flex: none; }
.dd { width: 7px; height: 4px; background: #555; clip-path: polygon(0 0, 100% 0, 50% 100%); }
.dd.off { background: #aaa; }
.aslot .dd { margin-left: 2px; }
.corner { position: absolute; right: 2px; bottom: 3px; background: #999; }
.sslot { flex: none; display: flex; justify-content: center; }
.sslot i { width: 1px; height: 20px; background: #ccc; }
.more { flex: none; display: flex; justify-content: center; }
.more path { fill: none; stroke: #000; stroke-width: 1.400; }
.main { height: 437px; flex: none; display: flex; }
.side { width: 49px; flex: none; background: linear-gradient(90deg, #fafafa, #ececec); border-right: 1px solid #b5b5b5; padding: 6px 0 0 5px; }
.hgrip { width: 17px; height: 3px; background: radial-gradient(circle at .5px .5px, #aaa .7px, transparent .8px) 0 0 / 3px 2px; }
.side .hgrip { margin-left: 11px; margin-bottom: 3px; }
.sitem { height: 32.150px; display: flex; align-items: center; }
.sitem svg { width: 24px; height: 24px; }
.sitem .dd { margin-left: 6.500px; }
.layers { width: 208px; flex: none; display: flex; flex-direction: column; }
.dockhead { height: 21px; flex: none; display: flex; align-items: center; font: 12px/16px "Open Sans", sans-serif; padding-left: 4px; padding-right: 2px; gap: 3px; }
.dockhead b, .combo b, .inp b { flex: 1; }
.dockhead svg { width: 11px; height: 11px; }
.ltools { height: 30px; flex: none; display: flex; align-items: center; padding: 0 0 2px 4px; }
.lt { width: 25px; height: 24px; display: flex; align-items: center; justify-content: center; }
.lt.on { width: 24px; margin-right: 1px; background: #dcdcdc; border: 1px solid #a5a5a5; border-radius: 2px; }
.lt svg { width: 16px; height: 16px; }
.ltools .dd { margin: 0 0 0 2px; }
.l2 { margin-left: 4px; }
.mm { width: 15px; }
.tree { flex: 1; background: #fff; border: 1px solid #b5b5b5; border-left: 0; margin-bottom: 1px; display: flex; flex-direction: column; overflow: hidden; }
.row { height: 18px; flex: none; display: flex; align-items: center; font-size: 12px; overflow: hidden; margin-right: 3px; }
.row.sel { background: #efefef; }
.row strong, .row > span:last-child { font-family: "Open Sans", sans-serif; padding-top: 1px; }
.tw { width: 24px; flex: none; padding-left: 7px; }
.cb { width: 14px; height: 14px; flex: none; border: 1px solid #b0b0b0; background: #fff; }
.cb svg { width: 12px; height: 12px; }
.cb path { fill: none; stroke: #000; stroke-width: 1.900; }
.cb.none { visibility: hidden; }
.ri { width: 28px; flex: none; display: flex; justify-content: center; }
.dot { width: 8px; height: 8px; border-radius: 50%; background: #8d3a62; border: 1px solid #6c3552; }
.sw { width: 16px; height: 16px; border: 1px solid #9c8b60; }
.sw.black { background: #000; border-color: #000; }
.sw.tan { background: #dcc78f; }
.fill { flex: 1; }
.hs { height: 14px; flex: none; display: flex; border-top: 1px solid #b5b5b5; background: linear-gradient(#fafafa, #eee); }
.hs b { flex: 1; border-left: 1px solid #b5b5b5; }
.hs em { border: 1px solid #b5b5b5; border-width: 0 1px; background: #e2e2e2; width: 34px; }
.hs .lthumb { width: 11px; }
.ab { width: 13px; display: flex; align-items: center; justify-content: center; }
.la, .ra { width: 4px; height: 7px; background: #444; clip-path: polygon(100% 0, 100% 100%, 0 50%); }
.ra { clip-path: polygon(0 0, 0 100%, 100% 50%); }
.ua, .da { width: 7px; height: 4px; background: #555; clip-path: polygon(0 0, 100% 0, 50% 100%); }
.ua { clip-path: polygon(0 100%, 100% 100%, 50% 0); }
.split { width: 6px; flex: none; display: flex; align-items: center; padding-left: 3px; }
.split.s2 { width: 9px; border-left: 1px solid #b5b5b5; }
.vgrip { width: 2px; height: 17px; background: radial-gradient(circle at .5px .5px, #aaa .7px, transparent .8px) 0 0 / 2px 3px; }
.map { box-sizing: content-box; border: 1px solid #b5b5b5; border-right-width: 0; margin-top: 1px; }
.right { width: 272px; flex: none; display: flex; flex-direction: column; }
.right .dockhead { padding-left: 2px; padding-right: 2px; }
.combo { border: 1px solid #aaa; border-radius: 3px; background: linear-gradient(#fff, #eee); display: flex; align-items: center; height: 24px; flex: none; }
.combo.open { border-right: 0; border-radius: 3px 0 0 3px; }
.combo > span { margin-top: 1px; }
.c1 { margin: 2px 4px 6px 1px; padding: 0 6px 0 7px; }
.c1 svg { margin-right: 2px; }
.styling { height: 287px; flex: none; display: flex; padding-left: 1px; }
.tabs { width: 38px; flex: none; background: #5e5e5e; }
.tab { height: 32px; display: flex; align-items: center; padding-left: 4px; }
.tab svg { width: 23px; height: 23px; }
.tab.cur { background: #f0f0f0; padding-left: 6px; }
.sbody { width: 227px; margin-left: 3px; flex: none; }
.scroll { height: 244px; display: flex; }
.view { width: 213px; flex: none; overflow: hidden; }
.view > .combo { padding-left: 7px; gap: 2px; }
.prev { display: flex; margin-top: 6px; height: 136px; }
.sym { flex: 1; border: 1px solid #b5b5b5; border-right: 0; background: #fff; overflow: hidden; }
.srow { height: 18px; display: flex; align-items: center; font: 12px/16px "Open Sans", sans-serif; letter-spacing: -.3px; }
.srow.hd { background: #efefef; padding-left: 6px; }
.srow strong, .srow span { padding-top: 1px; }
.p { width: 9px; height: 9px; margin: 0 10px 0 13px; background: #8d3a62; border-color: #6c3552; }
.srow.ch { padding-left: 47px; }
.r { width: 9px; height: 9px; margin-right: 9px; background: #dc1e2a; border-color: #8c1a20; }
hr { margin: 6px 0 8px; border: 0; border-top: 1px solid #a0a0a0; }
.frow { display: flex; align-items: center; height: 23px; }
.frow label { width: 37px; flex: none; }
.f { flex: 1; padding-left: 3px; height: 23px; }
.frow.op { height: 22px; }
.slider { height: 5px; flex: 1; margin-left: 1px; margin-top: -4px; background: #188ce8; border: 1px solid #176fb6; border-right: 0; border-radius: 2px 0 0 2px; }
.frow.co { margin-top: -1px; }
.col { padding: 1px 0 1px 4px; }
.col i { flex: 1; height: 18px; background: #dc1e2a; border-radius: 3px 0 0 3px; }
.vs { width: 14px; flex: none; display: flex; flex-direction: column; background: #fafafa; border-left: 1px solid #b5b5b5; }
.vs b { flex: 1; border-top: 1px solid #b5b5b5; }
.vs em { height: 28px; background: #e2e2e2; border: 1px solid #b5b5b5; border-width: 1px 0; }
.vb { height: 13px; display: flex; align-items: center; justify-content: center; }
.h2 { width: 214px; border-right: 1px solid #b5b5b5; }
.acts { display: flex; align-items: center; height: 29px; padding-top: 6px; }
.btn { width: 24px; height: 23px; flex: none; border: 1px solid #aaa; border-radius: 3px; background: linear-gradient(#fff, #eee); display: flex; align-items: center; justify-content: center; }
.btn svg { width: 14px; height: 14px; }
.b2 { margin: 0 7px 0 6px; }
.acts .cb { margin-left: -1px; }
.acts .lu { width: 70px; flex: none; padding-left: 4px; }
.btn.apply { width: 80px; margin-left: 3px; height: 22px; }
.hsplit { height: 10px; flex: none; display: flex; justify-content: center; align-items: center; }
.right .dp { height: 18px; }
.plotly { height: 55px; flex: none; display: flex; padding-left: 1px; overflow: hidden; }
.pside { width: 38px; flex: none; }
.pside .tab { height: 35px; }
.gear { height: 20px; background: #5e5e5e; overflow: hidden; padding: 1px 0 0 2px; }
.pmain { width: 219px; flex: none; overflow: hidden; }
.prow { display: flex; align-items: center; height: 28px; padding-top: 3px; }
.prow label { width: 55px; padding-left: 5px; flex: none; }
.prow .combo { flex: 1; padding-left: 6px; gap: 3px; height: 24px; }
.pp { height: 25px; display: flex; align-items: center; padding-left: 9px; font-size: 12px; }
.pp i { width: 11px; height: 7px; background: #333; clip-path: polygon(0 0, 100% 0, 50% 100%); margin-right: 7px; }
.gb { height: 20px; margin: -1px 0 0 7px; border: 1px solid #ccc; border-right: 0; border-radius: 3px; }
.vb.last { border-top: 1px solid #b5b5b5; }
.h3 { width: 262px; margin-left: -3px; border-right: 1px solid #b5b5b5; }
.h3 em { width: 95px; }
.status { height: 28px; flex: none; display: flex; align-items: center; padding: 1px 0 0 1px; }
.loc { width: 200px; height: 22px; flex: none; border: 1px solid #aaa; border-radius: 3px; background: #fff; display: flex; align-items: center; padding-left: 8px; gap: 6px; color: #777; }
.st { flex: none; overflow: hidden; display: flex; }
.fea { width: 24px; margin-left: 8px; }
.coord { width: 33px; margin: 0 3px 0 10px; justify-content: flex-end; }
.inp { height: 22px; flex: none; border: 1px solid #aaa; border-radius: 3px; background: #fff; display: flex; align-items: center; padding-left: 6px; }
.xy { width: 110px; }
.mouse { margin: -2px 0 0 4px; }
.sc { width: 7px; margin: 0 2px 0 13px; }
.scale { width: 82px; padding-left: 4px; }
.cbtn { width: 21px; height: 20px; border-left: 1px solid #aaa; background: #f6f6f6; display: flex; align-items: center; justify-content: center; border-radius: 0 3px 3px 0; }
.lock { margin: 0 7px 0 11px; }
.mag { width: 25px; margin-right: 3px; justify-content: flex-end; }
.pct { width: 87px; padding-left: 4px; }
.spin { width: 14px; height: 20px; border-left: 1px solid #aaa; display: flex; flex-direction: column; align-items: center; justify-content: center; gap: 4px; }
.rot { width: 23px; margin: 0 9px 0 9px; justify-content: center; }
.deg { width: 84px; margin-right: 6px; padding-left: 4px; }
.ren { margin-left: 4px; width: 36px; }
.crs { margin: 0 4px 0 18px; }
.epsg { width: 55px; }
.bub { margin-left: 17px; }
.sg { margin: 12px 0 0 15px; }
</style>
